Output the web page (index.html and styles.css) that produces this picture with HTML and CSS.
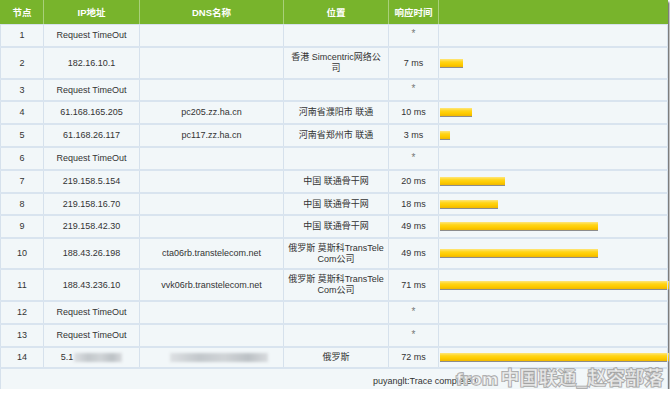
FILE: index.html
```html
<!DOCTYPE html>
<html>
<head>
<meta charset="utf-8">
<link rel="stylesheet" href="styles.css">
</head>
<body>
<div class="wrap">
<table class="trace">
<colgroup>
<col class="c1"><col class="c2"><col class="c3"><col class="c4"><col class="c5"><col class="c6">
</colgroup>
<thead>
<tr class="head"><th>节点</th><th>IP地址</th><th>DNS名称</th><th>位置</th><th>响应时间</th><th></th></tr>
</thead>
<tbody>
<tr class="h23"><td>1</td><td>Request TimeOut</td><td></td><td></td><td class="star">*</td><td></td></tr>
<tr class="h32"><td>2</td><td>182.16.10.1</td><td></td><td>香港 Simcentric网络公<br>司</td><td>7 ms</td><td><div class="track"><div class="bar" style="width:23px"></div></div></td></tr>
<tr class="h22"><td>3</td><td>Request TimeOut</td><td></td><td></td><td class="star">*</td><td></td></tr>
<tr class="h23"><td>4</td><td>61.168.165.205</td><td>pc205.zz.ha.cn</td><td>河南省濮阳市 联通</td><td>10 ms</td><td><div class="track"><div class="bar" style="width:32px"></div></div></td></tr>
<tr class="h23"><td>5</td><td>61.168.26.117</td><td>pc117.zz.ha.cn</td><td>河南省郑州市 联通</td><td>3 ms</td><td><div class="track"><div class="bar" style="width:10px"></div></div></td></tr>
<tr class="h23"><td>6</td><td>Request TimeOut</td><td></td><td></td><td class="star">*</td><td></td></tr>
<tr class="h23"><td>7</td><td>219.158.5.154</td><td></td><td>中国 联通骨干网</td><td>20 ms</td><td><div class="track"><div class="bar" style="width:65px"></div></div></td></tr>
<tr class="h22"><td>8</td><td>219.158.16.70</td><td></td><td>中国 联通骨干网</td><td>18 ms</td><td><div class="track"><div class="bar" style="width:58px"></div></div></td></tr>
<tr class="h23"><td>9</td><td>219.158.42.30</td><td></td><td>中国 联通骨干网</td><td>49 ms</td><td><div class="track"><div class="bar" style="width:158px"></div></div></td></tr>
<tr class="h31"><td>10</td><td>188.43.26.198</td><td>cta06rb.transtelecom.net</td><td>俄罗斯 莫斯科TransTele<br>Com公司</td><td>49 ms</td><td><div class="track"><div class="bar" style="width:158px"></div></div></td></tr>
<tr class="h32"><td>11</td><td>188.43.236.10</td><td>vvk06rb.transtelecom.net</td><td>俄罗斯 莫斯科TransTele<br>Com公司</td><td>71 ms</td><td><div class="track"><div class="bar" style="width:231px"></div></div></td></tr>
<tr class="h23"><td>12</td><td>Request TimeOut</td><td></td><td></td><td class="star">*</td><td></td></tr>
<tr class="h23"><td>13</td><td>Request TimeOut</td><td></td><td></td><td class="star">*</td><td></td></tr>
<tr class="h21"><td>14</td><td><span class="partial">5.1</span><span class="blur ipblur"></span></td><td><span class="blur dnsblur"></span></td><td>俄罗斯</td><td>72 ms</td><td><div class="track"><div class="bar" style="width:234px"></div></div></td></tr>
<tr class="foot"><td colspan="6">puyanglt:Trace completed</td></tr>
</tbody>
</table>
<div class="watermark"><span class="from">from</span>中国联通_赵容部落</div>
</div>
</body>
</html>
```

FILE: styles.css
```css
html, body {
  margin: 0;
  padding: 0;
  background: #ffffff;
}
body {
  font-family: "Liberation Sans", "Noto Sans CJK SC", sans-serif;
  font-size: 9px;
  color: #333333;
}
.wrap {
  position: relative;
  width: 667px;
}
.trace {
  width: 667px;
  table-layout: fixed;
  border-collapse: collapse;
  background: #f2f7f9;
  box-shadow: 1px 2px 2px rgba(0, 0, 0, 0.75);
}
.c1 { width: 43px; }
.c2 { width: 96px; }
.c3 { width: 144px; }
.c4 { width: 105px; }
.c5 { width: 50px; }
.c6 { width: 229px; }

.head {
  height: 24px;
  background: #78b42c;
}
.head th {
  color: #ffffff;
  font-weight: bold;
  font-size: 9.5px;
  text-align: center;
  border-left: 1px solid #a9d07a;
  border-bottom: 1px solid #d6e1ec;
  padding: 0;
}
.head th:first-child { border-left: 1px solid #78b42c; }

.trace td {
  text-align: center;
  vertical-align: middle;
  padding: 0 2px;
  border-left: 1px solid #d6e1ec;
  border-right: 1px solid #d6e1ec;
  border-bottom: 2px solid #d9e4ef;
  line-height: 11px;
  white-space: nowrap;
}
.h21 { height: 21px; }
.h22 { height: 22px; }
.h23 { height: 23px; }
.h31 { height: 31px; }
.h32 { height: 32px; }

.trace td.star {
  color: #777777;
  font-size: 10px;
  line-height: 10px;
  padding-bottom: 2px;
}
.trace td:last-child {
  padding: 0 0 0 1px;
  text-align: left;
}
.track {
  overflow: hidden;
  width: 229px;
}
.bar {
  height: 8px;
  background: linear-gradient(#ffe67a 0%, #ffd51a 35%, #ffcc00 65%, #f0b800 100%);
  border-bottom: 1px solid #8c8c8c;
}
.partial {
  vertical-align: middle;
}
.blur {
  display: inline-block;
  vertical-align: middle;
  height: 9px;
  background: linear-gradient(90deg, #dde0e3, #c2c7cb 30%, #d0d4d7 55%, #bcc1c5 80%, #d8dbde);
  filter: blur(1.5px);
}
.ipblur { width: 48px; margin-left: 1px; }
.dnsblur { width: 98px; margin-left: 14px; }

.foot { height: 21px; }
.trace .foot td {
  text-align: left;
  padding: 5px 0 0 372px;
  border-bottom: none;
  vertical-align: middle;
  font-size: 9px;
  color: #333;
}

.watermark {
  position: absolute;
  left: 456px;
  top: 365px;
  font-family: "Noto Sans CJK SC", sans-serif;
  font-weight: bold;
  font-size: 19px;
  line-height: 24px;
  color: rgba(255, 255, 255, 0.55);
  -webkit-text-stroke: 1.4px #a3a3a3;
  paint-order: stroke fill;
  white-space: nowrap;
}
.watermark .from {
  font-family: "DejaVu Sans", sans-serif;
  font-weight: bold;
  font-size: 16px;
  margin-right: 2px;
}
```
